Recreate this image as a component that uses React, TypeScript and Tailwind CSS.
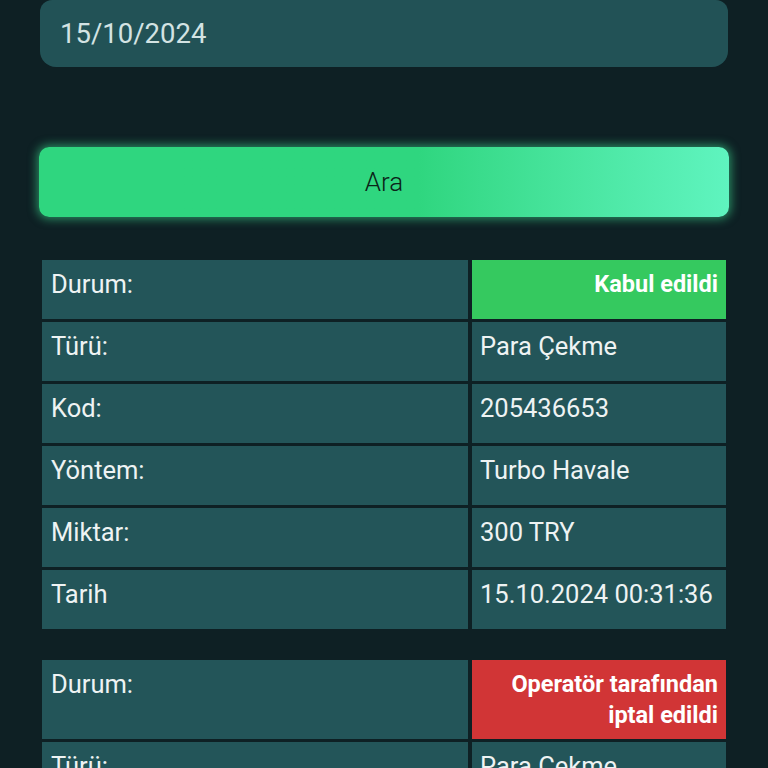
const rows1 = [
  { label: 'Türü:', value: 'Para Çekme' },
  { label: 'Kod:', value: '205436653' },
  { label: 'Yöntem:', value: 'Turbo Havale' },
  { label: 'Miktar:', value: '300 TRY' },
  { label: 'Tarih', value: '15.10.2024 00:31:36' },
];

const rows2 = [{ label: 'Türü:', value: 'Para Çekme' }];

function TxTable({
  status,
  statusClass,
  rows,
}: {
  status: string;
  statusClass: string;
  rows: { label: string; value: string }[];
}) {
  return (
    <div className="grid grid-cols-[426px_254px] gap-x-[4px] gap-y-[3px] mx-[42px]">
      <div className="bg-[#235559] text-[#eef3f3] px-[9px] pt-[10px] pb-[6px] min-h-[59px]">Durum:</div>
      <div className={`${statusClass} text-white font-bold text-[23.5px] leading-[31px] text-right px-[8px] pt-[9px] pb-[8px] min-h-[59px]`}>
        {status}
      </div>
      {rows.map((r) => (
        <div key={r.label} className="contents">
          <div className="bg-[#235559] text-[#eef3f3] px-[9px] pt-[10px] h-[59px]">{r.label}</div>
          <div className="bg-[#235559] text-[#eef3f3] px-[8px] pt-[10px] h-[59px]">{r.value}</div>
        </div>
      ))}
    </div>
  );
}

export default function App() {
  return (
    <div
      className="min-h-screen bg-[#0e2024] text-[25.5px] leading-[28px] pb-10"
      style={{ fontFamily: 'Roboto, "Liberation Sans", sans-serif' }}
    >
      <div className="mx-[40px] h-[67px] rounded-b-2xl rounded-t-xl bg-[#225256] flex items-center px-[20px] text-[27.5px] text-[#d3e3e3]">
        15/10/2024
      </div>
      <div className="mx-[39px] mt-[80px] h-[70px] rounded-[10px] bg-gradient-to-r from-[#2fd67f] from-55% to-[#5ff4bf] flex items-center justify-center text-[#0b2418] text-[26px] font-light shadow-[0_0_10px_2px_rgba(64,230,150,0.55)]">
        Ara
      </div>
      <div className="mt-[43px]">
        <TxTable status="Kabul edildi" statusClass="bg-[#35c95f]" rows={rows1} />
      </div>
      <div className="mt-[31px]">
        <TxTable status={'Operatör tarafından iptal edildi'} statusClass="bg-[#d13536]" rows={rows2} />
      </div>
    </div>
  );
}
